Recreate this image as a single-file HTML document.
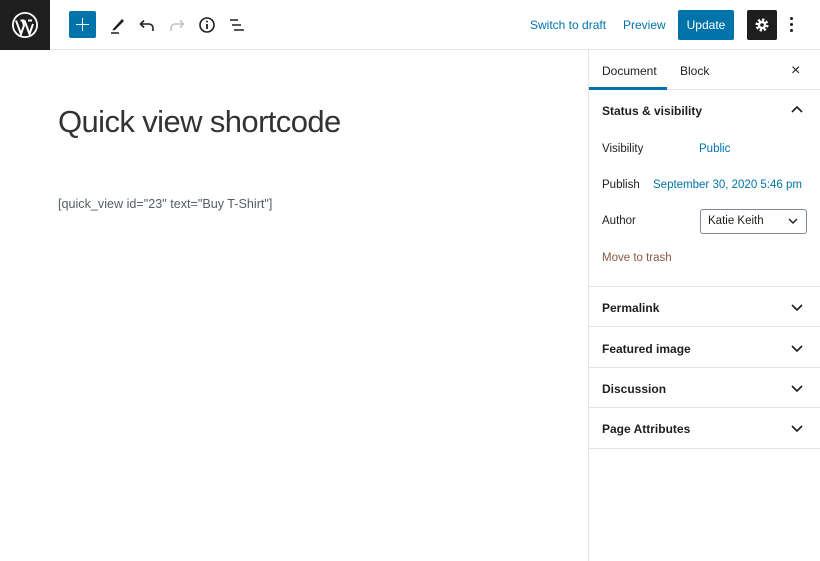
<!DOCTYPE html>
<html><head><meta charset="utf-8"><style>
*{margin:0;padding:0;box-sizing:border-box}
body{width:820px;height:561px;background:#fff;font-family:"Liberation Sans",sans-serif;color:#1e1e1e;position:relative;overflow:hidden}
.a{position:absolute}
.hdr{left:0;top:0;width:820px;height:50px;border-bottom:1px solid #e2e4e7}
.side{left:588px;top:50px;width:232px;height:511px;border-left:1px solid #e2e4e7}
.row{position:absolute;left:589px;width:231px;border-bottom:1px solid #e2e4e7}
.lbl{font-size:12px;font-weight:bold;color:#1e1e1e}
.t{font-size:11.5px}
.blue{color:#0073aa}
</style></head><body>
<div class="a hdr"></div>
<div class="a" style="left:0;top:0;width:50px;height:50px;background:#1e1e1e"></div>
<svg class="a" style="left:11px;top:11px" width="28" height="28" viewBox="0 0 28 28"><circle cx="14" cy="14" r="13" fill="#fff"/><circle cx="14" cy="14" r="11.2" fill="#1e1e1e"/><path d="M5 9.5 L10 23 L13 14.5 L11.5 9.5 M9.5 9.5h4 M13.5 9.5 L18.5 23 L22 13 M12 9.5 M17 9.5h4" stroke="#fff" stroke-width="2" fill="none"/></svg>
<div class="a" style="left:69px;top:11px;width:27px;height:27px;background:#0073aa;border-radius:2px"></div>
<div class="a" style="left:76px;top:23.7px;width:13px;height:1.6px;background:#fff"></div>
<div class="a" style="left:81.7px;top:18px;width:1.6px;height:13px;background:#fff"></div>
<svg class="a" style="left:108px;top:15px" width="20" height="20" viewBox="0 0 20 20"><path d="M5 14 L14 4 L16 6 L7 15 L4.5 15.5Z" fill="#1e1e1e"/><path d="M3 18h8" stroke="#1e1e1e" stroke-width="1.5"/></svg>
<svg class="a" style="left:137px;top:15px" width="20" height="20" viewBox="0 0 20 20"><path d="M4 9h8a4 4 0 0 1 4 4v3 M7 5.5 L3.5 9 L7 12.5" stroke="#1e1e1e" stroke-width="1.6" fill="none"/></svg>
<svg class="a" style="left:167px;top:15px" width="20" height="20" viewBox="0 0 20 20"><path d="M16 9H8a4 4 0 0 0-4 4v3 M13 5.5 L16.5 9 L13 12.5" stroke="#c3c4c7" stroke-width="1.6" fill="none"/></svg>
<svg class="a" style="left:197px;top:15px" width="20" height="20" viewBox="0 0 20 20"><circle cx="10" cy="10" r="7" stroke="#1e1e1e" stroke-width="1.6" fill="none"/><path d="M10 9v5" stroke="#1e1e1e" stroke-width="1.8"/><circle cx="10" cy="6.5" r="1" fill="#1e1e1e"/></svg>
<svg class="a" style="left:227px;top:15px" width="20" height="20" viewBox="0 0 20 20"><path d="M3 5h8M5 10h9M7 15h10" stroke="#1e1e1e" stroke-width="1.6"/></svg>
<div class="a t blue" style="left:530px;top:18px;font-size:12px">Switch to draft</div>
<div class="a t blue" style="left:623px;top:18px;font-size:12px">Preview</div>
<div class="a" style="left:678px;top:10px;width:56px;height:30px;background:#0073aa;border-radius:2px;color:#fff;font-size:12px;line-height:30px;text-align:center">Update</div>
<div class="a" style="left:747px;top:10px;width:30px;height:30px;background:#1e1e1e;border-radius:2px"></div>
<svg class="a" style="left:753px;top:16px" width="18" height="18" viewBox="0 0 18 18"><circle cx="9" cy="9" r="5" fill="none" stroke="#fff" stroke-width="3" stroke-dasharray="2.2 1.7"/><circle cx="9" cy="9" r="4.2" fill="#fff"/><circle cx="9" cy="9" r="1.8" fill="#1e1e1e"/></svg>
<div class="a" style="left:790px;top:17px;width:3px;height:3px;background:#1e1e1e;border-radius:50%;box-shadow:0 6px 0 #1e1e1e,0 12px 0 #1e1e1e"></div>

<div class="a" style="left:58px;top:104px;font-size:31px;font-weight:300;color:#333;letter-spacing:-0.6px">Quick view shortcode</div>
<div class="a" style="left:58px;top:197px;font-size:12.6px;color:#555d66">[quick_view id="23" text="Buy T-Shirt"]</div>

<div class="a side"></div>
<div class="row" style="top:50px;height:40px"></div>
<div class="a" style="left:589px;top:87px;width:78px;height:3px;background:#0073aa"></div>
<div class="a lbl" style="left:602px;top:64px;font-weight:normal">Document</div>
<div class="a lbl" style="left:680px;top:64px;font-weight:normal">Block</div>
<div class="a" style="left:791px;top:62px;font-size:16px">×</div>
<div class="row" style="top:90px;height:197px"></div>
<div class="a lbl" style="left:602px;top:104px">Status &amp; visibility</div>
<svg class="a" style="left:790px;top:104px" width="14" height="12"><path d="M2 8l5-5 5 5" stroke="#1e1e1e" stroke-width="1.6" fill="none"/></svg>
<div class="a t" style="left:602px;top:143px">Visibility</div>
<div class="a t blue" style="left:699px;top:143px">Public</div>
<div class="a t" style="left:602px;top:179px">Publish</div>
<div class="a t blue" style="left:653px;top:179px">September 30, 2020 5:46 pm</div>
<div class="a t" style="left:602px;top:215px">Author</div>
<div class="a" style="left:700px;top:209px;width:107px;height:25px;border:1px solid #7e8993;border-radius:3px"></div>
<div class="a t" style="left:708px;top:215px">Katie Keith</div>
<svg class="a" style="left:787px;top:215px" width="12" height="12"><path d="M2 4l4 4 4-4" stroke="#1e1e1e" stroke-width="1.4" fill="none"/></svg>
<div class="a t" style="left:602px;top:252px;color:#8a5a44">Move to trash</div>
<div class="row" style="top:287px;height:40px"></div>
<div class="row" style="top:327px;height:41px"></div>
<div class="row" style="top:368px;height:40px"></div>
<div class="row" style="top:408px;height:41px"></div>
<div class="a lbl" style="left:602px;top:301px">Permalink</div>
<div class="a lbl" style="left:602px;top:342px">Featured image</div>
<div class="a lbl" style="left:602px;top:382px">Discussion</div>
<div class="a lbl" style="left:602px;top:422px">Page Attributes</div>
<svg class="a" style="left:790px;top:301px" width="14" height="12"><path d="M2 4l5 5 5-5" stroke="#1e1e1e" stroke-width="1.6" fill="none"/></svg>
<svg class="a" style="left:790px;top:342px" width="14" height="12"><path d="M2 4l5 5 5-5" stroke="#1e1e1e" stroke-width="1.6" fill="none"/></svg>
<svg class="a" style="left:790px;top:382px" width="14" height="12"><path d="M2 4l5 5 5-5" stroke="#1e1e1e" stroke-width="1.6" fill="none"/></svg>
<svg class="a" style="left:790px;top:422px" width="14" height="12"><path d="M2 4l5 5 5-5" stroke="#1e1e1e" stroke-width="1.6" fill="none"/></svg>
</body></html>
